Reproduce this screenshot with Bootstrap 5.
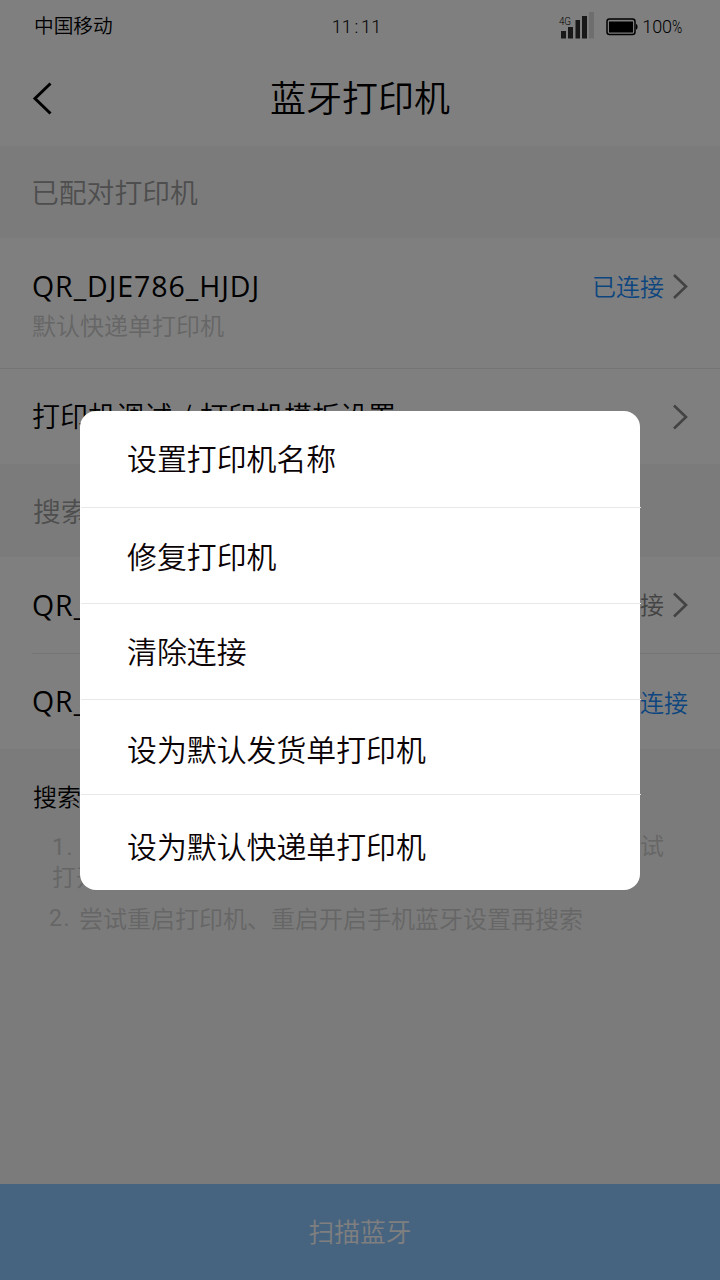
<!DOCTYPE html>
<html lang="zh-CN">
<head>
<meta charset="utf-8">
<meta name="viewport" content="width=device-width, initial-scale=1">
<title>蓝牙打印机</title>
<link href="https://cdn.jsdelivr.net/npm/bootstrap@5.3.0/dist/css/bootstrap.min.css" rel="stylesheet">
<style>
body{font-family:"Noto Sans CJK SC",sans-serif;font-weight:350;color:#000;line-height:1;background:#f7f7f7;overflow:hidden}
.screen{width:720px;height:1280px;background:#f7f7f7}
.statusbar{height:50px;padding:0 38px 0 34px;font-size:19.7px}
.statusbar>*{flex:1 1 0}
.digits{font-family:Roboto,"Noto Sans CJK SC",sans-serif;font-size:18px;letter-spacing:-.1px}
.clock{letter-spacing:.2px;padding:3px 3px 0 0}
.clock i{font-style:normal;display:inline-block;width:9px;text-align:center}
.pct{display:inline-block;transform:scaleX(.77);transform-origin:left;width:10px}
.titlebar{height:96px;padding:0 32px}
.titlebar h1{font-size:36px;font-weight:350;line-height:1;padding:0 4px 4px 0}
.section-label{height:92px;padding:0 32px;font-size:27.8px;color:#9c9c9c}
.cell{background:#fff;padding:0 32px;font-size:28px;height:96px}
.cell-tall{height:130px}
.device{font-family:"Open Sans","Noto Sans CJK SC",sans-serif;font-weight:400;font-size:28.5px;letter-spacing:.95px}
.sub{font-size:24px;color:#ccc}
.state{font-size:24px}
.state span{padding-bottom:2px}
.blue{color:#1a8cff}
.hair{height:1px;background:#ebebeb}
.tips{font-size:24px;color:#ccc;padding:35px 56px 0 33px}
.tip-lines{line-height:31px;padding:21px 0 0 19px;white-space:nowrap}
.tip-num{display:inline-block;font-family:Roboto,sans-serif;font-size:23px;font-weight:400;letter-spacing:1.5px}
.tip-first{width:588px;line-height:1}
.scan{height:96px;background:#8cc6ff;color:#fff;font-size:25.8px;border:0;border-radius:0;font-weight:350;padding:0 0 2px}
.veil{background:rgba(0,0,0,.5)}
.sheet{left:80px;top:411px;width:560px;height:479px;background:#fff;border-radius:16px}
.opt{height:96px;padding:0 0 2px 46px;margin:0 -1px 0 1px;font-size:29.9px;color:#0b0306}
.opt+.opt{border-top:1px solid #e9e9e9}
.opt:nth-child(2){padding-bottom:0}
.opt:nth-child(4){height:95px;padding:3px 0 0 46px}
.opt:nth-child(5){padding:6px 0 0 46px}
</style>
</head>
<body>
<div class="screen position-relative d-flex flex-column mx-0">
  <header class="bg-white">
    <div class="statusbar d-flex align-items-center">
      <span>中国移动</span>
      <span class="digits clock text-center">11<i>:</i>11</span>
      <span class="d-flex justify-content-end align-items-center digits" style="padding-top:3px">
        <svg width="36" height="28" viewBox="0 0 36 28" class="me-2" style="margin-top:-3px">
          <text x="1" y="14" font-family="Roboto" font-size="11" textLength="12" lengthAdjust="spacingAndGlyphs">4G</text>
          <g fill="#303030"><path d="M3 20h5v7.500H3zM10 16h5v11.500h-5zM17.500 9h4.500v18.500h-4.500zM24 5h5v22.500h-5z"/></g>
          <path fill="#dcdcdc" d="M31 1h5v26.500h-5z"/>
        </svg>
        <svg width="32" height="18" viewBox="0 0 32 18" class="ms-1 me-1">
          <rect x="1" y="1" width="28" height="15.500" rx="2.500" fill="none" stroke="#000" stroke-width="1.500"/>
          <path d="M3 3.500h24v11H3zM30 6q1.600 0 1.600 2.700T30 11.500z"/>
        </svg>
        <span class="text-nowrap">100<span class="pct">%</span></span>
      </span>
    </div>
    <div class="titlebar d-flex align-items-center">
      <svg width="20" height="34" viewBox="0 0 20 34" fill="none" stroke="#000" stroke-width="3"><path d="M18.500 2.500L3 17.500l15.500 15"/></svg>
      <h1 class="flex-grow-1 text-center mb-0 me-3">蓝牙打印机</h1>
    </div>
  </header>

  <div class="section-label d-flex align-items-center" style="padding-left:31px">已配对打印机</div>
  <div class="cell cell-tall d-flex justify-content-between">
    <div>
      <div class="device" style="padding-top:34px">QR_DJE786_HJDJ</div>
      <div class="sub" style="padding-top:12px">默认快递单打印机</div>
    </div>
    <div class="d-flex align-items-center state blue h-75"><span class="me-2">已连接</span>
      <svg width="16" height="26" viewBox="0 0 16 26" fill="none" stroke="#868686" stroke-width="2.600"><path d="M2 1L14 12.500 2 24"/></svg>
    </div>
  </div>
  <div class="hair"></div>
  <div class="cell d-flex justify-content-between align-items-center" style="height:95px">
    <span class="pb-1">打印机调试<span class="d-inline-block text-center" style="width:28px">/</span>打印机模板设置</span>
    <svg width="16" height="26" viewBox="0 0 16 26" fill="none" stroke="#868686" stroke-width="2.600"><path d="M2 1.500L14 13 2 24.500"/></svg>
  </div>

  <div class="section-label d-flex align-items-center" style="height:93px;padding-left:33px">搜索</div>
  <div class="cell d-flex justify-content-between align-items-center">
    <span class="device">QR_</span>
    <div class="d-flex align-items-center state" style="color:#868686"><span class="me-2">未连接</span>
      <svg width="16" height="26" viewBox="0 0 16 26" fill="none" stroke="#868686" stroke-width="2.600"><path d="M2 1.500L14 13 2 24.500"/></svg>
    </div>
  </div>
  <div class="bg-white ps-4"><div class="hair ms-2"></div></div>
  <div class="cell d-flex justify-content-between align-items-center" style="height:95px">
    <span class="device">QR_</span>
    <span class="state blue">连接</span>
  </div>

  <div class="tips flex-grow-1">
    <div class="text-black">搜索</div>
    <div class="tip-lines"><span class="tip-num tip-first">1.</span>试<br>打开</div>
    <div class="d-flex text-nowrap" style="padding:15px 0 0 16px"><span class="tip-num" style="width:30px;padding-top:1px">2.</span><span>尝试重启打印机、重启开启手机蓝牙设置再搜索</span></div>
  </div>
  <button class="scan w-100">扫描蓝牙</button>

  <div class="veil position-absolute top-0 start-0 w-100 h-100"></div>
  <div class="sheet position-absolute" role="dialog">
    <div class="opt d-flex align-items-center">设置打印机名称</div>
    <div class="opt d-flex align-items-center">修复打印机</div>
    <div class="opt d-flex align-items-center">清除连接</div>
    <div class="opt d-flex align-items-center">设为默认发货单打印机</div>
    <div class="opt d-flex align-items-center">设为默认快递单打印机</div>
  </div>
</div>
<script src="https://cdn.jsdelivr.net/npm/bootstrap@5.3.0/dist/js/bootstrap.bundle.min.js"></script>
</body>
</html>
